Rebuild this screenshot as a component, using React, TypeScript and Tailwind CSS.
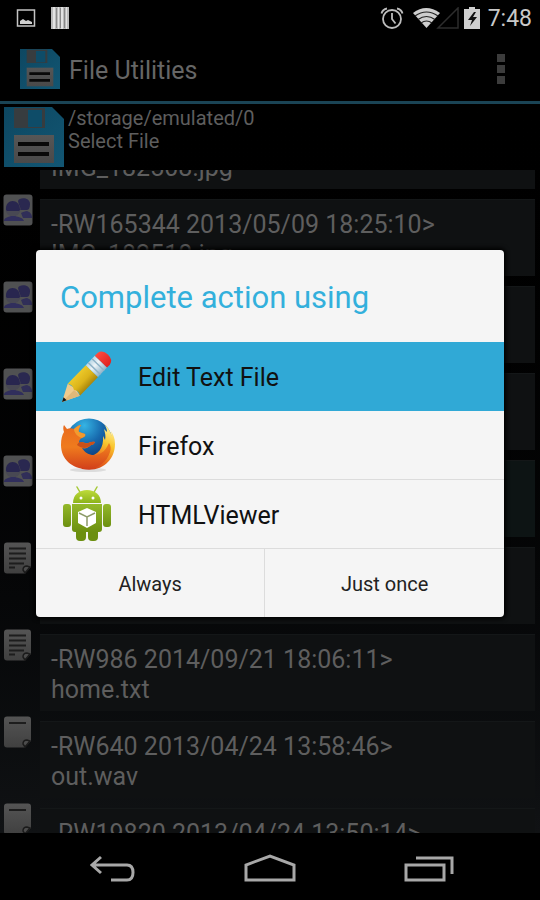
import React from 'react';
import clsx from 'clsx';

type FileKind = 'people' | 'text' | 'blank';

interface FileEntry {
  kind: FileKind;
  info: string;
  name: string;
  pressed?: boolean;
}

const files: FileEntry[] = [
  { kind: 'people', info: '', name: 'IMG_182508.jpg' },
  { kind: 'people', info: '-RW165344 2013/05/09 18:25:10>', name: 'IMG_182510.jpg' },
  { kind: 'people', info: '', name: '' },
  { kind: 'people', info: '', name: '' },
  { kind: 'people', info: '', name: '', pressed: true },
  { kind: 'text', info: '', name: '' },
  { kind: 'text', info: '-RW986 2014/09/21 18:06:11>', name: 'home.txt' },
  { kind: 'blank', info: '-RW640 2013/04/24 13:58:46>', name: 'out.wav' },
  { kind: 'blank', info: '-RW19820 2013/04/24 13:50:14>', name: '' },
];

const FloppyIcon: React.FC<{ className?: string }> = ({ className }) => (
  <svg viewBox="0 0 60 60" className={className} aria-hidden="true">
    <defs>
      <linearGradient id="floppy" x1="0" y1="0" x2="1" y2="1">
        <stop offset="0" stopColor="#0d4761" />
        <stop offset="1" stopColor="#125673" />
      </linearGradient>
      <linearGradient id="label" x1="0" y1="0" x2="0" y2="1">
        <stop offset="0" stopColor="#565656" />
        <stop offset="1" stopColor="#494949" />
      </linearGradient>
    </defs>
    <path d="M0 0h48l12 12v48H0z" fill="url(#floppy)" />
    <path d="M10 1h31v20H10z" fill="#373c3f" />
    <path d="M24 3h14v17H24z" fill="#0e4c68" />
    <path d="M10 28h40v28H10z" fill="url(#label)" />
    <path d="M14 35h31v4H14zM14 45h31v4H14z" fill="#090909" />
  </svg>
);

const FileIcon: React.FC<{ kind: FileKind }> = ({ kind }) => {
  if (kind === 'people') {
    return (
      <svg viewBox="0 0 30 32" className="h-8 w-[30px]" aria-hidden="true">
        <rect x="0.5" y="0.5" width="29" height="31" rx="3" fill="#505152" />
        <path d="M15 7c1-4 12-4 12 3 0 3-1 6-3 6H17z" fill="#2a2850" />
        <path d="M18 19c2-1 4-2 6-2 3 1 5 3 5 7h-9z" fill="#302e58" />
        <circle cx="10" cy="15" r="7.500" fill="#484853" />
        <path d="M3 16C2 4 17 4 17 16l-1 1H4z" fill="#28264f" />
        <path d="M1 27c0-3 4-4 7-5h4c4 1 8 2 9 5z" fill="#302e5c" />
      </svg>
    );
  }
  return (
    <svg viewBox="0 0 30 32" className="h-8 w-[30px]" aria-hidden="true">
      <defs>
        <linearGradient id="sheet" x1="0" y1="0" x2="0" y2="1">
          <stop offset="0" stopColor="#545454" />
          <stop offset="1" stopColor="#404040" />
        </linearGradient>
      </defs>
      <path d="M4 0.5h21q3 0 3 3V25l-6 6.500H4q-3 0-3-3v-25q0-3 3-3z" fill="url(#sheet)" />
      <path d="M20 28q0-4 4-4l3 1-5 6z" fill="#4c4c4c" stroke="#1b1b1b" strokeWidth="1.500" />
      <path
        d={kind === 'text' ? 'M6 6.500h17M6 11.500h17M6 16.500h17M6 21.500h15M6 25.500h6' : 'M6 7h17'}
        stroke="#1d1d1d"
        strokeWidth="2"
      />
    </svg>
  );
};

const PencilIcon = () => (
  <svg viewBox="0 0 56 56" className="h-14 w-14" aria-hidden="true">
    <defs>
      <linearGradient id="wood" x1="0" y1="0" x2="0" y2="1">
        <stop offset="0" stopColor="#ecc92a" />
        <stop offset="0.55" stopColor="#dcb41a" />
        <stop offset="1" stopColor="#a9860c" />
      </linearGradient>
      <linearGradient id="ferrule" x1="0" y1="0" x2="0" y2="1">
        <stop offset="0" stopColor="#b9d6e6" />
        <stop offset="0.4" stopColor="#eef4f8" />
        <stop offset="1" stopColor="#8fb3c8" />
      </linearGradient>
      <linearGradient id="rubber" x1="0" y1="0" x2="0" y2="1">
        <stop offset="0" stopColor="#ff4b3e" />
        <stop offset="1" stopColor="#e0201f" />
      </linearGradient>
    </defs>
    <g transform="translate(2 54) rotate(-46)">
      <path d="M0 0L17-8.500L19 0L17 8.500z" fill="#efcb8d" />
      <path d="M0 0L17 0.500V8.500z" fill="#e0b878" />
      <path d="M0 0l4.500-2.200v4.400z" fill="#151515" />
      <path d="M17-8.500H43V8.500H17q3-4 0-8.500 3-4 0-8.500z" fill="url(#wood)" />
      <path d="M43-8.500H56V8.500H43z" fill="url(#ferrule)" />
      <path d="M46.500-8.500v17M52-8.500v17" stroke="#8fb3c8" strokeWidth="1.500" />
      <path d="M56-8.500h4q6 1 6 8.500t-6 8.500h-4z" fill="url(#rubber)" />
    </g>
  </svg>
);

const FirefoxIcon = () => (
  <svg viewBox="0 0 56 56" className="h-14 w-14" aria-hidden="true">
    <defs>
      <radialGradient id="globe" cx="0.4" cy="0.15" r="0.85">
        <stop offset="0" stopColor="#35b4e4" />
        <stop offset="0.45" stopColor="#1769ad" />
        <stop offset="1" stopColor="#0b2a66" />
      </radialGradient>
      <linearGradient id="tail" x1="0.75" y1="0" x2="0.3" y2="1">
        <stop offset="0" stopColor="#fff3a0" />
        <stop offset="0.35" stopColor="#f9c52c" />
        <stop offset="0.7" stopColor="#ea6a1c" />
        <stop offset="1" stopColor="#c8371a" />
      </linearGradient>
      <linearGradient id="fox" x1="0.5" y1="0" x2="0.5" y2="1">
        <stop offset="0" stopColor="#e96a1d" />
        <stop offset="0.5" stopColor="#ef7b1e" />
        <stop offset="1" stopColor="#d2401a" />
      </linearGradient>
    </defs>
    <ellipse cx="28" cy="53" rx="18" ry="2" fill="#dcdcdc" />
    <circle cx="29" cy="25" r="23.500" fill="url(#globe)" />
    <path
      d="M44 7c2 3 3 5 3 8l-3-3c1 4 2 7 1 11l-2-4c1 12-5 20-15 20l-12 4 6 9c20 4 33-9 33-25 0-6-2-10-4-13l1 5c-2-5-4-9-8-12z"
      fill="url(#tail)"
    />
    <path
      d="M4 8c1 1 2 3 3 4 2-1 5-1 7 0 2-2 5-4 7-4-1 2-3 4-2 7l6 2c1 2-1 3-3 4-2 1-3 2-3 5 2-1 4-1 6 0 4 1 5-2 10-1-1 2-2 3-4 3-3 3-6 4-9 3 4 7 12 9 19 5 4-2 6-6 8-10 2 3 2 6 1 9-3 10-12 17-23 17C12 52 1 42 1 28c0-6 1-10 3-13-1-3-1-5 0-7z"
      fill="url(#fox)"
    />
    <path d="M14 12c2-2 5-4 7-4-1 2-3 4-2 7l6 2c1 2-1 3-3 4-4-1-8-5-8-9z" fill="#f39a2e" />
    <path d="M17 28c2-4 5-3 8-2 4 1 5-2 10-1-1 2-2 3-4 3-4 4-9 4-14 0z" fill="#c9501a" />
  </svg>
);

const AndroidIcon = () => (
  <svg viewBox="0 0 56 56" className="h-14 w-14" aria-hidden="true">
    <defs>
      <linearGradient id="head" x1="0" y1="0" x2="0" y2="1">
        <stop offset="0" stopColor="#bedb3a" />
        <stop offset="1" stopColor="#8cb31a" />
      </linearGradient>
      <linearGradient id="body" x1="0" y1="0" x2="0" y2="1">
        <stop offset="0" stopColor="#94b92a" />
        <stop offset="1" stopColor="#6c8f10" />
      </linearGradient>
    </defs>
    <g transform="translate(-1 0)">
      <path d="M18 1l4 7M38 1l-4 7" stroke="#a5c936" strokeWidth="1.500" strokeLinecap="round" />
      <path d="M14 17c0-8 6-13 14-13s14 5 14 13z" fill="url(#head)" />
      <circle cx="22" cy="12" r="1.500" fill="#fff" />
      <circle cx="34" cy="12" r="1.500" fill="#fff" />
      <rect x="17" y="40" width="10" height="15" rx="4" fill="#6c8f10" />
      <rect x="29" y="40" width="10" height="15" rx="4" fill="#6c8f10" />
      <rect x="4" y="18" width="8" height="23" rx="3" fill="url(#body)" />
      <rect x="44" y="18" width="8" height="23" rx="3" fill="url(#body)" />
      <path d="M13 18h30v25q0 3-3 3H16q-3 0-3-3z" fill="url(#body)" />
      <path d="M28 22l9 4v11l-9 5-9-5V26z" fill="#fff" />
      <path d="M20 27l8 4 8-4M28 31v9" stroke="#8d9b6a" strokeWidth="1.500" fill="none" />
    </g>
  </svg>
);

const choices = [
  { label: 'Edit Text File', Icon: PencilIcon },
  { label: 'Firefox', Icon: FirefoxIcon },
  { label: 'HTMLViewer', Icon: AndroidIcon },
];

const StatusBar = () => (
  <div className="flex h-9 shrink-0 items-center justify-between bg-black pl-4 pr-2">
    <div className="flex items-center gap-[15px]">
      <svg viewBox="0 0 20 20" className="h-5 w-5" aria-hidden="true">
        <rect x="1.500" y="2" width="17" height="16" fill="none" stroke="#c4c4c4" strokeWidth="1.500" />
        <path d="M4 16v-3l3-2 3 2 2-1 4 2v2z" fill="#d0d0d0" />
      </svg>
      <svg viewBox="0 0 18 22" className="h-[22px] w-[18px]" aria-hidden="true">
        <path d="M0 0h18v22H0z" fill="#bbb" />
        <path d="M2 0h2v22H2zM7 0h1v22H7zM10 0h2v22h-2zM15 0h1v22h-1z" fill="#e2e2e2" />
        <path d="M5 1h1v20H5zM9 1h1v20H9zM13 1h1v20h-1z" fill="#888" />
      </svg>
    </div>
    <div className="flex items-center gap-1">
      <svg viewBox="0 0 24 22" className="h-[22px] w-6" aria-hidden="true">
        <g fill="none" stroke="#bdbdbd" strokeWidth="1.800">
          <circle cx="12" cy="12" r="9" />
          <path d="M12 6v6l3.500 4.500M1.500 6.500q1-4 5.500-5M22.500 6.500q-1-4-5.500-5" />
        </g>
      </svg>
      <svg viewBox="0 0 48 22" className="ml-1 h-[22px] w-12" aria-hidden="true">
        <path d="M1 6Q14-4 28 6L14.500 21z" fill="#cfcfcf" />
        <path d="M3 9q11.500-8 23 0M6 12.500q8.500-6 17 0M9 16q5.500-4 11 0" fill="none" stroke="#222" strokeWidth="1.200" />
        <path d="M26 21L46 1v20z" fill="none" stroke="#2d2d2d" strokeWidth="1.500" />
      </svg>
      <svg viewBox="0 0 16 22" className="mr-1 h-[22px] w-4" aria-hidden="true">
        <path d="M5 0h6v2h5v20H0V2h5z" fill="#cfcfcf" />
        <path d="M10 5l-6 8h4l-2 6 7-9H9l3-5z" fill="#111" />
      </svg>
      <span className="pt-[2px] text-[23px] leading-6 text-[#c9c9c9]">7:48</span>
    </div>
  </div>
);

const ChooserDialog = () => {
  const [selected, setSelected] = React.useState(0);

  return (
    <div
      role="dialog"
      aria-labelledby="chooser-title"
      className="w-full overflow-hidden rounded-[4px] bg-[#f5f5f5] shadow-[0_0_4px_2px_#000]"
    >
      <h2 id="chooser-title" className="flex h-[92px] items-center px-6 pt-1 text-[31px] text-[#33b0dc]">
        Complete action using
      </h2>
      <ul>
        {choices.map(({ label, Icon }, i) => (
          <li key={label}>
            <button
              onClick={() => setSelected(i)}
              className={clsx(
                'flex h-[69px] w-full items-center gap-[22px] border-b px-6 text-left text-[25px] text-[#111]',
                selected === i ? 'border-[#30a9d6] bg-[#30a9d6]' : 'border-[#dcdcdc]'
              )}
            >
              <Icon />
              <span className="pt-1">{label}</span>
            </button>
          </li>
        ))}
      </ul>
      <div className="flex h-[68px] divide-x divide-[#dcdcdc] text-[20px] text-[#222]">
        <button className="w-[49%] pt-[2px]">Always</button>
        <button className="flex-1 pt-[2px]">Just once</button>
      </div>
    </div>
  );
};

export default function App() {
  return (
    <div className="flex h-screen flex-col overflow-hidden bg-black font-['Roboto',sans-serif]">
      <StatusBar />
      <main className="relative flex min-h-0 flex-1 flex-col bg-linear-to-b from-black to-[#101214]">
        <header className="flex h-[68px] shrink-0 items-center justify-between border-b-[3px] border-[#1a4455] pl-5 pr-[27px]">
          <div className="flex items-center gap-[9px]">
            <FloppyIcon className="h-10 w-10" />
            <h1 className="pt-1 text-[25px] text-[#666]">File Utilities</h1>
          </div>
          <button aria-label="More options" className="flex w-6 flex-col items-center gap-[3px]">
            <span className="h-2 w-2 bg-[#3c3c3c]" />
            <span className="h-2 w-2 bg-[#3c3c3c]" />
            <span className="h-2 w-2 bg-[#3c3c3c]" />
          </button>
        </header>
        <div className="flex h-[66px] shrink-0 gap-1 pl-1 pt-[3px]">
          <FloppyIcon className="h-[60px] w-[60px]" />
          <p className="text-[20px] leading-[23px] text-[#5e5e5e]">
            /storage/emulated/0
            <br />
            Select File
          </p>
        </div>
        <div className="min-h-0 flex-1 overflow-hidden">
          <ul className="-mt-[63px]">
            {files.map((file, i) => (
              <li key={i} className="flex h-[87px] items-start gap-[7px] pl-[3px] pr-[5px]">
                <FileIcon kind={file.kind} />
                <div
                  className={clsx(
                    'mt-[5px] h-[77px] flex-1 border-t border-[#141718] px-[11px] pt-[10px] text-[25px] leading-[30px] text-[#5e5e5e]',
                    file.pressed ? 'bg-[#0d1414]' : 'bg-[#0f1112]'
                  )}
                >
                  <p className="h-[30px]">{file.info}</p>
                  <p>{file.name}</p>
                </div>
              </li>
            ))}
          </ul>
        </div>
        <div className="absolute inset-0 flex items-center justify-center px-9 pb-[2px]">
          <ChooserDialog />
        </div>
      </main>
      <nav className="flex h-[67px] shrink-0 items-center bg-black px-8 pt-1">
        <button aria-label="Back" className="flex flex-1 justify-center">
          <svg viewBox="0 0 48 30" className="h-[30px] w-12" aria-hidden="true">
            <path d="M14 3L5 11l9 8M5 11h35q6 0 6 7.500T40 26H24" fill="none" stroke="#a8a8a8" strokeWidth="3" />
          </svg>
        </button>
        <button aria-label="Home" className="flex flex-1 justify-center">
          <svg viewBox="0 0 52 30" className="h-[30px] w-[52px]" aria-hidden="true">
            <path d="M2 26V11L26 2l24 9v15z" fill="none" stroke="#a8a8a8" strokeWidth="3" />
          </svg>
        </button>
        <button aria-label="Recent apps" className="flex flex-1 justify-center">
          <svg viewBox="0 0 50 30" className="h-[30px] w-[50px]" aria-hidden="true">
            <path d="M2 11h38v15H2zM12 4h36v16" fill="none" stroke="#a8a8a8" strokeWidth="3" />
          </svg>
        </button>
      </nav>
    </div>
  );
}
